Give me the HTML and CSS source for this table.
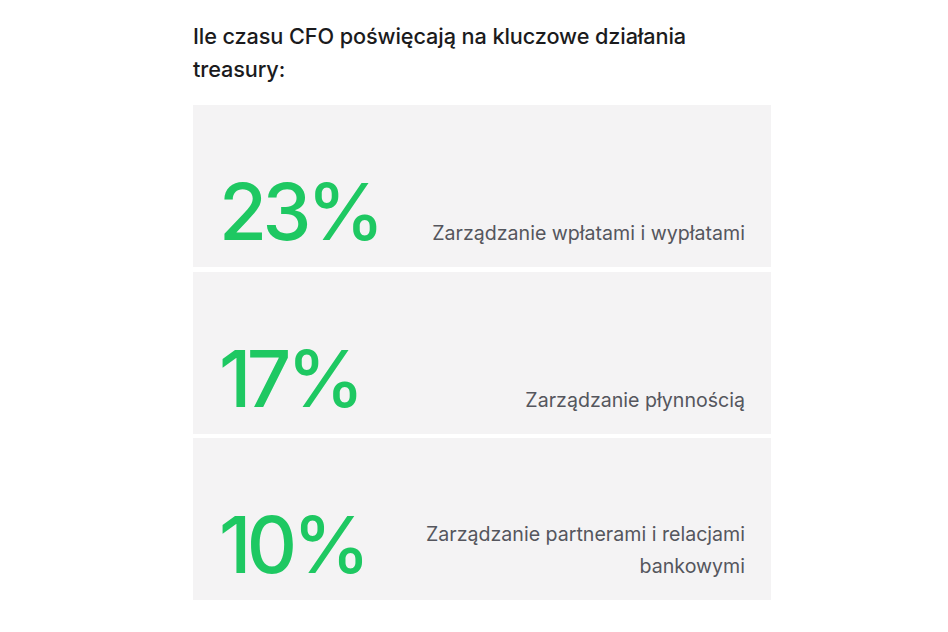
FILE: index.html
```html
<!DOCTYPE html>
<html lang="pl">
<head>
<meta charset="utf-8">
<title>Treasury</title>
<link rel="stylesheet" href="styles.css">
</head>
<body>
<main class="page">
  <h1 class="title">Ile czasu CFO poświęcają na kluczowe działania treasury:</h1>
  <section class="stats">
    <div class="card">
      <span class="num">23%</span>
      <span class="label">Zarządzanie wpłatami i wypłatami</span>
    </div>
    <div class="card">
      <span class="num">17%</span>
      <span class="label">Zarządzanie płynnością</span>
    </div>
    <div class="card">
      <span class="num">10%</span>
      <span class="label">Zarządzanie partnerami i relacjami<br>bankowymi</span>
    </div>
  </section>
</main>
</body>
</html>
```
FILE: styles.css
```css
html, body {
  margin: 0;
  padding: 0;
  background: #ffffff;
}
body {
  font-family: Inter, "Liberation Sans", sans-serif;
}
.page {
  width: 578px;
  padding: 20px 0 0 193px;
}
.title {
  margin: 0 0 19px;
  font-size: 21.7px;
  line-height: 33px;
  font-weight: 500;
  color: #1b1b1d;
  letter-spacing: -0.1px;
  width: 540px;
}
.stats {
  display: flex;
  flex-direction: column;
  gap: 4.5px;
}
.card {
  box-sizing: border-box;
  height: 162px;
  background: #f4f3f4;
  display: flex;
  justify-content: space-between;
  align-items: last baseline;
  padding: 0 26px 16px 26px;
}
.num {
  font-size: 78px;
  line-height: 78px;
  font-weight: 460;
  color: #1ec862;
  letter-spacing: -4.5px;
}
.label {
  font-size: 19.6px;
  line-height: 32px;
  color: #55565d;
  text-align: right;
}
```
